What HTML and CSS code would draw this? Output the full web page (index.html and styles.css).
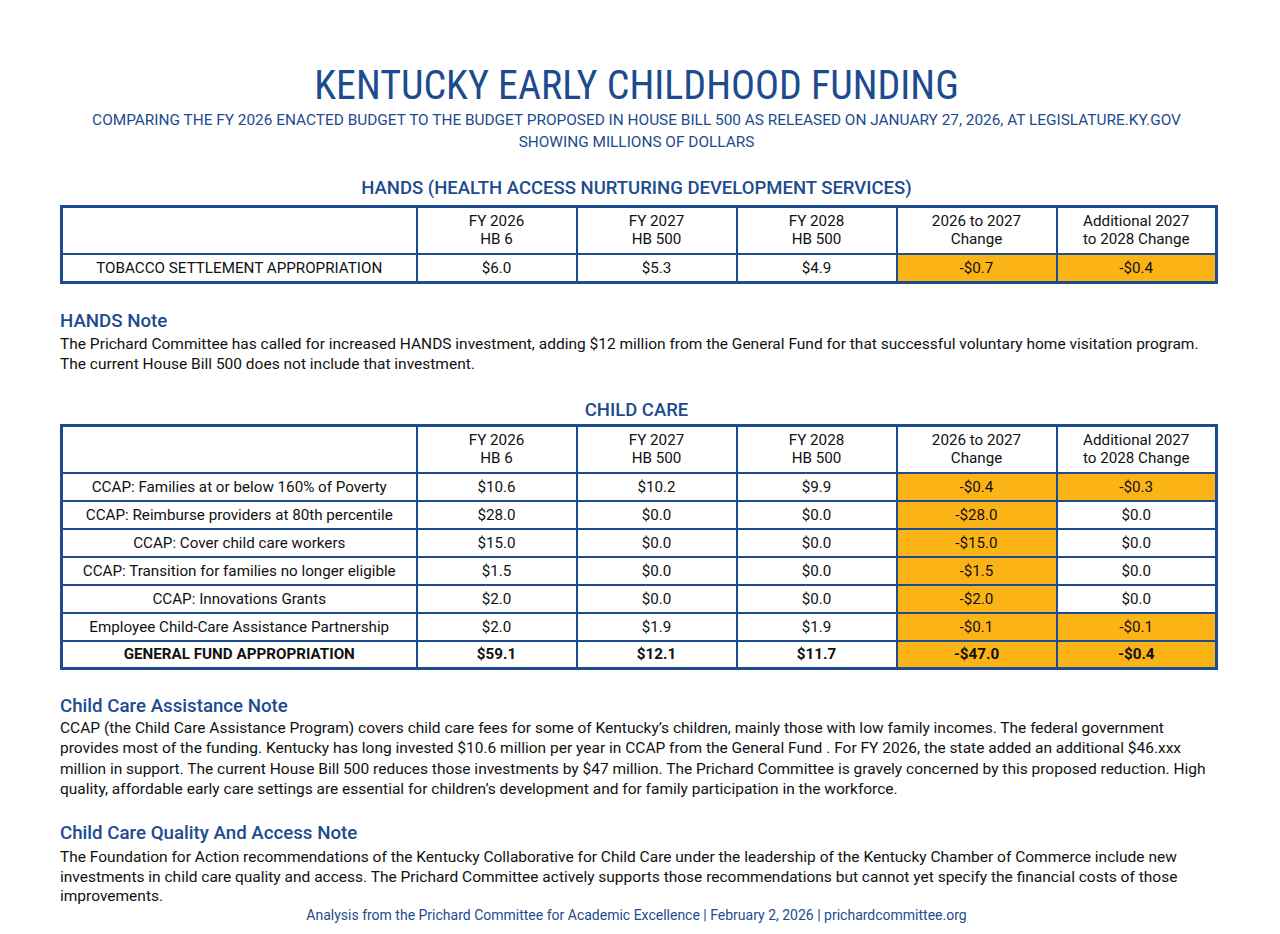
FILE: index.html
```html
<!DOCTYPE html>
<html lang="en">
<head>
<meta charset="utf-8">
<title>Kentucky Early Childhood Funding</title>
<link rel="stylesheet" href="styles.css">
</head>
<body>
<main class="page">
  <header class="masthead">
    <h1 class="title">KENTUCKY EARLY CHILDHOOD FUNDING</h1>
    <p class="subtitle">COMPARING THE FY 2026 ENACTED BUDGET TO THE BUDGET PROPOSED IN HOUSE BILL 500 AS RELEASED ON JANUARY 27, 2026, AT LEGISLATURE.KY.GOV<br>SHOWING MILLIONS OF DOLLARS</p>
  </header>

  <section class="block block-hands">
    <h2 class="table-title">HANDS (HEALTH ACCESS NURTURING DEVELOPMENT SERVICES)</h2>
    <table class="fund-table">
      <colgroup>
        <col class="c-label"><col class="c-num"><col class="c-num"><col class="c-num"><col class="c-num"><col class="c-num">
      </colgroup>
      <thead>
        <tr>
          <th></th>
          <th>FY 2026<br>HB 6</th>
          <th>FY 2027<br>HB 500</th>
          <th>FY 2028<br>HB 500</th>
          <th>2026 to 2027<br>Change</th>
          <th>Additional 2027<br>to 2028 Change</th>
        </tr>
      </thead>
      <tbody>
        <tr>
          <td>TOBACCO SETTLEMENT APPROPRIATION</td>
          <td>$6.0</td><td>$5.3</td><td>$4.9</td>
          <td class="neg">-$0.7</td><td class="neg">-$0.4</td>
        </tr>
      </tbody>
    </table>
  </section>

  <section class="note note-hands">
    <h3 class="note-title">HANDS Note</h3>
    <p class="note-text">The Prichard Committee has called for increased HANDS investment, adding $12 million from the General Fund for that successful voluntary home visitation program.<br>The current House Bill 500 does not include that investment.</p>
  </section>

  <section class="block block-care">
    <h2 class="table-title">CHILD CARE</h2>
    <table class="fund-table">
      <colgroup>
        <col class="c-label"><col class="c-num"><col class="c-num"><col class="c-num"><col class="c-num"><col class="c-num">
      </colgroup>
      <thead>
        <tr>
          <th></th>
          <th>FY 2026<br>HB 6</th>
          <th>FY 2027<br>HB 500</th>
          <th>FY 2028<br>HB 500</th>
          <th>2026 to 2027<br>Change</th>
          <th>Additional 2027<br>to 2028 Change</th>
        </tr>
      </thead>
      <tbody>
        <tr><td>CCAP: Families at or below 160% of Poverty</td><td>$10.6</td><td>$10.2</td><td>$9.9</td><td class="neg">-$0.4</td><td class="neg">-$0.3</td></tr>
        <tr><td>CCAP: Reimburse providers at 80th percentile</td><td>$28.0</td><td>$0.0</td><td>$0.0</td><td class="neg">-$28.0</td><td>$0.0</td></tr>
        <tr><td>CCAP: Cover child care workers</td><td>$15.0</td><td>$0.0</td><td>$0.0</td><td class="neg">-$15.0</td><td>$0.0</td></tr>
        <tr><td>CCAP: Transition for families no longer eligible</td><td>$1.5</td><td>$0.0</td><td>$0.0</td><td class="neg">-$1.5</td><td>$0.0</td></tr>
        <tr><td>CCAP: Innovations Grants</td><td>$2.0</td><td>$0.0</td><td>$0.0</td><td class="neg">-$2.0</td><td>$0.0</td></tr>
        <tr><td>Employee Child-Care Assistance Partnership</td><td>$2.0</td><td>$1.9</td><td>$1.9</td><td class="neg">-$0.1</td><td class="neg">-$0.1</td></tr>
        <tr class="total"><td>GENERAL FUND APPROPRIATION</td><td>$59.1</td><td>$12.1</td><td>$11.7</td><td class="neg">-$47.0</td><td class="neg">-$0.4</td></tr>
      </tbody>
    </table>
  </section>

  <section class="note note-ccap">
    <h3 class="note-title">Child Care Assistance Note</h3>
    <p class="note-text">CCAP (the Child Care Assistance Program) covers child care fees for some of Kentucky’s children, mainly those with low family incomes. The federal government<br>provides most of the funding. Kentucky has long invested $10.6 million per year in CCAP from the General Fund . For FY 2026, the state added an additional $46.xxx<br>million in support. The current House Bill 500 reduces those investments by $47 million. The Prichard Committee is gravely concerned by this proposed reduction. High<br>quality, affordable early care settings are essential for children’s development and for family participation in the workforce.</p>
  </section>

  <section class="note note-quality">
    <h3 class="note-title">Child Care Quality And Access Note</h3>
    <p class="note-text">The Foundation for Action recommendations of the Kentucky Collaborative for Child Care under the leadership of the Kentucky Chamber of Commerce include new<br>investments in child care quality and access. The Prichard Committee actively supports those recommendations but cannot yet specify the financial costs of those<br>improvements.</p>
  </section>

  <footer class="credit">Analysis from the Prichard Committee for Academic Excellence | February 2, 2026 | prichardcommittee.org</footer>
</main>
</body>
</html>
```

FILE: styles.css
```css
* { box-sizing: border-box; }

html, body {
  margin: 0;
  padding: 0;
  background: #ffffff;
}

body {
  font-family: Roboto, "Liberation Sans", Arial, sans-serif;
  color: #111111;
}

.page {
  width: 1280px;
  padding: 62px 67px 0 60px;
}

.masthead {
  text-align: center;
}

.title {
  margin: 0;
  font-family: "Liberation Sans Narrow", "Arial Narrow", Roboto, sans-serif;
  font-stretch: condensed;
  font-size: 40px;
  line-height: 48px;
  font-weight: 400;
  color: #1d4b8f;
}

.subtitle {
  margin: -1px 0 0;
  font-size: 15.4px;
  line-height: 22px;
  color: #1d4b8f;
}

.block-hands {
  margin-top: 25px;
}

.table-title {
  margin: 0;
  text-align: center;
  font-size: 18.5px;
  line-height: 20px;
  font-weight: 500;
  color: #1d4b8f;
}

.block-hands .table-title {
  margin-bottom: 7px;
}

.block-care .table-title {
  margin-bottom: 4px;
}

.fund-table {
  width: 1153px;
  border-collapse: collapse;
  table-layout: fixed;
  border: 3px solid #1d4b8f;
  font-size: 15.2px;
}

.c-label { width: 355px; }
.c-num { width: 160px; }

.fund-table th,
.fund-table td {
  border: 2px solid #1d4b8f;
  text-align: center;
  padding: 0 4px;
  color: #111111;
}

.fund-table th {
  height: 47px;
  font-weight: 400;
  line-height: 18px;
}

.fund-table td {
  height: 28px;
  line-height: 18px;
}

.block-hands .fund-table td {
  height: 29px;
}

.fund-table td.neg {
  background: #fcb316;
}

.fund-table tr.total td {
  font-weight: 700;
}

.note-title {
  margin: 0;
  font-size: 18.7px;
  line-height: 24px;
  font-weight: 500;
  color: #1d4b8f;
}

.note-text {
  margin: 1px 0 0;
  font-size: 15.5px;
  line-height: 20px;
  white-space: nowrap;
}

.note-hands {
  margin-top: 25px;
}

.block-care {
  margin-top: 26px;
}

.note-ccap {
  margin-top: 24px;
}

.note-ccap .note-text {
  margin-top: 0;
  line-height: 20.3px;
}

.note-quality {
  margin-top: 22px;
}

.note-quality .note-text {
  margin-top: 3px;
  line-height: 19.5px;
}

.credit {
  margin-top: -1px;
  text-align: center;
  font-size: 14px;
  line-height: 18px;
  color: #1d4b8f;
}
```
